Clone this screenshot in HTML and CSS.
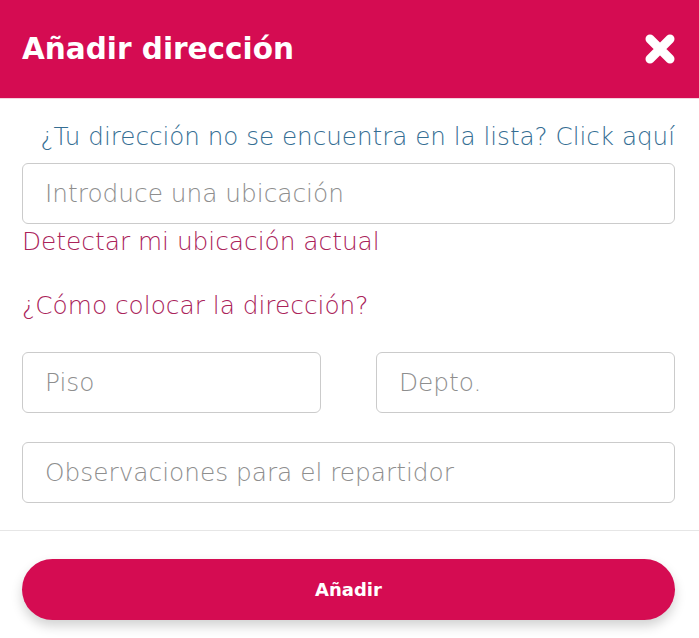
FILE: index.html
```html
<!DOCTYPE html>
<html lang="es">
<head>
<meta charset="utf-8">
<title>Añadir dirección</title>
<link rel="stylesheet" href="styles.css">
</head>
<body>
<div class="modal">
  <header class="modal-header">
    <h1 class="modal-title">Añadir dirección</h1>
    <button class="close-btn" aria-label="Cerrar">
      <svg width="30" height="30" viewBox="0 0 30 30"><path d="M5 5 L25 25 M25 5 L5 25" stroke="#fff" stroke-width="9" stroke-linecap="round"/></svg>
    </button>
  </header>
  <div class="modal-body">
    <a class="not-found-link" href="#">¿Tu dirección no se encuentra en la lista? Click aquí</a>
    <input class="field" type="text" placeholder="Introduce una ubicación">
    <a class="accent-link detect" href="#">Detectar mi ubicación actual</a>
    <a class="accent-link howto" href="#">¿Cómo colocar la dirección?</a>
    <div class="field-row">
      <input class="field" type="text" placeholder="Piso">
      <input class="field" type="text" placeholder="Depto.">
    </div>
    <input class="field notes" type="text" placeholder="Observaciones para el repartidor">
  </div>
  <footer class="modal-footer">
    <button class="submit-btn">Añadir</button>
  </footer>
</div>
</body>
</html>
```
FILE: styles.css
```css
* { box-sizing: border-box; }
html, body { margin: 0; padding: 0; background: #fff; }
body { font-family: "DejaVu Sans", "Open Sans", sans-serif; }

.modal { width: 699px; height: 638px; display: flex; flex-direction: column; }

.modal-header {
  height: 99px;
  background: #d50c52;
  border-bottom: 1px solid #f4d3de;
  display: flex;
  align-items: center;
  justify-content: space-between;
  padding: 0 24px 0 22px;
}
.modal-title {
  margin: 0;
  color: #fff;
  font-size: 29.5px;
  font-weight: 700;
}
.close-btn {
  background: none; border: 0; padding: 0;
  width: 30px; height: 30px; display: flex;
}

.modal-body {
  padding: 22px 24px 0 22px;
  display: flex;
  flex-direction: column;
  flex: 1;
}
.not-found-link {
  align-self: flex-end;
  color: #356e93;
  font-size: 24.6px;
  font-weight: 200;
  text-decoration: none;
  line-height: 32px;
  margin-bottom: 10px;
}
.field {
  width: 100%;
  height: 61px;
  border: 1px solid #cbcbcb;
  border-radius: 6px;
  padding: 0 22px;
  font-family: inherit;
  font-size: 24.8px;
  font-weight: 200;
  color: #333;
  background: #fff;
}
.field::placeholder { color: #8e8e8e; }
.accent-link {
  color: #aa2259;
  font-size: 24.8px;
  font-weight: 200;
  text-decoration: none;
  line-height: 32px;
}
.detect { margin-top: 2px; }
.howto { margin-top: 32px; }
.field-row {
  display: grid;
  grid-template-columns: 1fr 1fr;
  gap: 55px;
  margin-top: 30px;
}
.notes { margin-top: 29px; }

.modal-footer {
  border-top: 1px solid #e6e6e6;
  padding: 28px 24px 18px 22px;
}
.submit-btn {
  width: 100%;
  height: 61px;
  border: 0;
  border-radius: 31px;
  background: #d50c52;
  color: #fff;
  font-family: inherit;
  font-size: 18px;
  font-weight: 700;
  box-shadow: 0 6px 12px rgba(0,0,0,0.18);
}
```
